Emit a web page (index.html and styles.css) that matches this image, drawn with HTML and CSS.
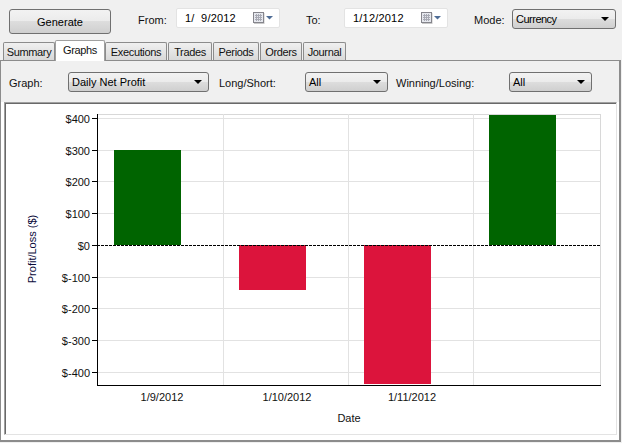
FILE: index.html
```html
<!DOCTYPE html>
<html lang="en">
<head>
    <meta charset="UTF-8">
    <title>Graphs</title>
    <link rel="stylesheet" href="styles.css">
</head>
<body>
    <div class="window">
        <div class="toolbar">
            <button class="generate-btn">Generate</button>
            <span class="label from-label">From:</span>
            <div class="date-box">
                <span class="date-value">1/&nbsp; 9/2012</span>
                <svg class="cal-icon" width="20" height="12" viewBox="0 0 20 12">
                    <rect x="1" y="1" width="10.5" height="11" fill="#c9c9c9"/>
                    <rect x="0.5" y="0.5" width="10" height="10" fill="#e6e8ee" stroke="#85858c"/>
                    <path d="M2 3.5h7M2 5.5h7M2 7.5h7M3.5 2v7M5.5 2v7M7.5 2v7" stroke="#a8aab4" stroke-width="1" fill="none"/>
                    <path d="M13 4h7l-3.5 3.5z" fill="#4f6d96"/>
                </svg>
            </div>
            <span class="label to-label">To:</span>
            <div class="date-box">
                <span class="date-value">1/12/2012</span>
                <svg class="cal-icon" width="20" height="12" viewBox="0 0 20 12">
                    <rect x="1" y="1" width="10.5" height="11" fill="#c9c9c9"/>
                    <rect x="0.5" y="0.5" width="10" height="10" fill="#e6e8ee" stroke="#85858c"/>
                    <path d="M2 3.5h7M2 5.5h7M2 7.5h7M3.5 2v7M5.5 2v7M7.5 2v7" stroke="#a8aab4" stroke-width="1" fill="none"/>
                    <path d="M13 4h7l-3.5 3.5z" fill="#4f6d96"/>
                </svg>
            </div>
            <span class="label mode-label">Mode:</span>
            <div class="combo mode-combo">Currency</div>
        </div>

        <div class="tabs">
            <div class="tab tab-summary">Summary</div>
            <div class="tab tab-graphs active">Graphs</div>
            <div class="tab tab-executions">Executions</div>
            <div class="tab tab-trades">Trades</div>
            <div class="tab tab-periods">Periods</div>
            <div class="tab tab-orders">Orders</div>
            <div class="tab tab-journal">Journal</div>
        </div>

        <div class="tab-panel">
            <div class="filters">
                <span class="label graph-label">Graph:</span>
                <div class="combo graph-combo">Daily Net Profit</div>
                <span class="label long-label">Long/Short:</span>
                <div class="combo long-combo">All</div>
                <span class="label winning-label">Winning/Losing:</span>
                <div class="combo winning-combo">All</div>
            </div>

            <div class="chart-panel">
                <svg class="chart" width="611" height="331" viewBox="5 103 611 331">
                    <!-- grid -->
                    <g stroke="#e2e2e2" stroke-width="1" shape-rendering="crispEdges">
                        <path d="M97.5 114.5H600.5" stroke="#d8d8d8"/>
                        <path d="M97 118.5H600M97 150.5H600M97 181.5H600M97 213.5H600M97 277.5H600M97 308.5H600M97 340.5H600M97 372.5H600"/>
                        <path d="M223.5 114V385M348.5 114V385M473.5 114V385"/>
                        <path d="M600.5 114V385" stroke="#d8d8d8"/>
                    </g>
                    <!-- bars -->
                    <g shape-rendering="crispEdges">
                        <rect x="114" y="150" width="67" height="95" fill="#006400"/>
                        <rect x="239" y="245" width="67" height="45" fill="#dc143c"/>
                        <rect x="364" y="245" width="67" height="139" fill="#dc143c"/>
                        <rect x="489" y="115" width="67" height="130" fill="#006400"/>
                    </g>
                    <!-- axes -->
                    <g stroke="#000" stroke-width="1" shape-rendering="crispEdges" fill="none">
                        <path d="M97.5 114V385.5H601"/>
                        <path d="M92 118.5h5M92 150.5h5M92 181.5h5M92 213.5h5M92 245.5h5M92 277.5h5M92 308.5h5M92 340.5h5M92 372.5h5"/>
                        <path d="M97 245.5H600" stroke-dasharray="3 1"/>
                    </g>
                    <!-- y labels -->
                    <g class="tick" text-anchor="end">
                        <text x="90" y="123">$400</text>
                        <text x="90" y="155">$300</text>
                        <text x="90" y="186">$200</text>
                        <text x="90" y="218">$100</text>
                        <text x="90" y="250">$0</text>
                        <text x="90" y="282">$-100</text>
                        <text x="90" y="313">$-200</text>
                        <text x="90" y="345">$-300</text>
                        <text x="90" y="377">$-400</text>
                    </g>
                    <!-- x labels -->
                    <g class="tick" text-anchor="middle">
                        <text x="162" y="401">1/9/2012</text>
                        <text x="287" y="401">1/10/2012</text>
                        <text x="412" y="401">1/11/2012</text>
                    </g>
                    <text class="axis-title" x="349" y="422" text-anchor="middle">Date</text>
                    <text class="axis-title y-title" x="-249" y="36" text-anchor="middle" transform="rotate(-90)">Profit/Loss ($)</text>
                </svg>
            </div>
        </div>
    </div>
</body>
</html>
```

FILE: styles.css
```css
* {
    margin: 0;
    padding: 0;
    box-sizing: border-box;
}

body {
    font-family: 'Liberation Sans', Arial, sans-serif;
    font-size: 11px;
    background: #f0f0f0;
    color: #000;
    overflow: hidden;
}

.window {
    width: 622px;
    height: 443px;
    display: flex;
    flex-direction: column;
}

.toolbar {
    display: flex;
    align-items: flex-start;
    height: 40px;
    padding: 8px 0 0 9px;
}

.label {
    color: #111;
    line-height: 13px;
}

.generate-btn {
    width: 102px;
    height: 25px;
    margin-top: 1px;
    border: 1px solid #707070;
    border-radius: 3px;
    background: linear-gradient(#f2f2f2 0%, #ebebeb 50%, #dddddd 50%, #cfcfcf 100%);
    font-family: inherit;
    font-size: 11px;
    color: #000;
}

.from-label {
    margin: 6px 0 0 27px;
    width: 38px;
}

.to-label {
    margin: 6px 0 0 26px;
    width: 38px;
}

.mode-label {
    margin: 6px 0 0 26px;
    width: 38px;
}

.date-box {
    width: 104px;
    height: 20px;
    display: flex;
    align-items: center;
    justify-content: space-between;
    padding: 0 6px 0 8px;
    background: #fff;
    border: 1px solid #e3e3e3;
    border-radius: 2px;
}

.date-value {
    letter-spacing: 0.2px;
}

.cal-icon {
    display: block;
    flex: none;
}

.combo {
    position: relative;
    height: 20px;
    padding-left: 3px;
    line-height: 18px;
    border: 1px solid #707070;
    border-radius: 3px;
    background: linear-gradient(#f2f2f2 0%, #ebebeb 50%, #dddddd 50%, #cfcfcf 100%);
}

.combo::after {
    content: '';
    position: absolute;
    right: 6px;
    top: 7px;
    border-top: 4px solid #000;
    border-left: 4px solid transparent;
    border-right: 4px solid transparent;
}

.mode-combo {
    width: 104px;
    margin-top: 1px;
    letter-spacing: -0.5px;
}

.tabs {
    display: flex;
    align-items: flex-end;
    height: 20px;
    padding-left: 3px;
    position: relative;
    z-index: 1;
}

.tab {
    height: 18px;
    line-height: 19px;
    text-align: center;
    letter-spacing: -0.35px;
    color: #111;
    margin-right: 1px;
    background: linear-gradient(#f0f0f0, #d9d9d9);
    border: 1px solid #8c8c8c;
    border-bottom: none;
    border-radius: 2px 2px 0 0;
}

.tab.active {
    height: 21px;
    line-height: 18px;
    margin: 0 0 -1px -1px;
    background: #fff;
    border-color: #a0a0a0;
}

.tab-summary { width: 52px; }
.tab-graphs { width: 50px; }
.tab-executions { width: 62px; }
.tab-trades { width: 44px; }
.tab-periods { width: 46px; }
.tab-orders { width: 42px; }
.tab-journal { width: 43px; margin-right: 0; }

.tab-panel {
    width: 621px;
    height: 382px;
    padding: 0 2px 5px 3px;
    border: 1px solid #8c8c8c;
    border-width: 1px 2px 2px 1px;
    background: linear-gradient(#f0f0f0 41px, #fff 41px);
    display: flex;
    flex-direction: column;
}

.filters {
    height: 41px;
    flex: none;
    display: flex;
    align-items: flex-start;
    padding: 11px 0 0 5px;
}

.filters .label {
    margin-top: 5px;
}

.graph-label { width: 59px; }
.graph-combo { width: 141px; }
.long-label { width: 86px; margin-left: 10px; }
.long-combo { width: 83px; }
.winning-label { width: 113px; margin-left: 8px; }
.winning-combo { width: 83px; }

.chart-panel {
    flex: 1;
    background: #fff;
    border-top: 1px solid #a0a0a0;
    border-left: 1px solid #a0a0a0;
    border-bottom: 1px solid #e3e3e3;
    border-right: 1px solid #e3e3e3;
    box-shadow: inset 1px 1px 0 #696969;
}

.chart {
    display: block;
}

.tick text,
.axis-title {
    font-family: 'Liberation Sans', Arial, sans-serif;
    font-size: 11px;
    fill: #111;
}

.y-title {
    fill: #0a0a3a;
}
```
